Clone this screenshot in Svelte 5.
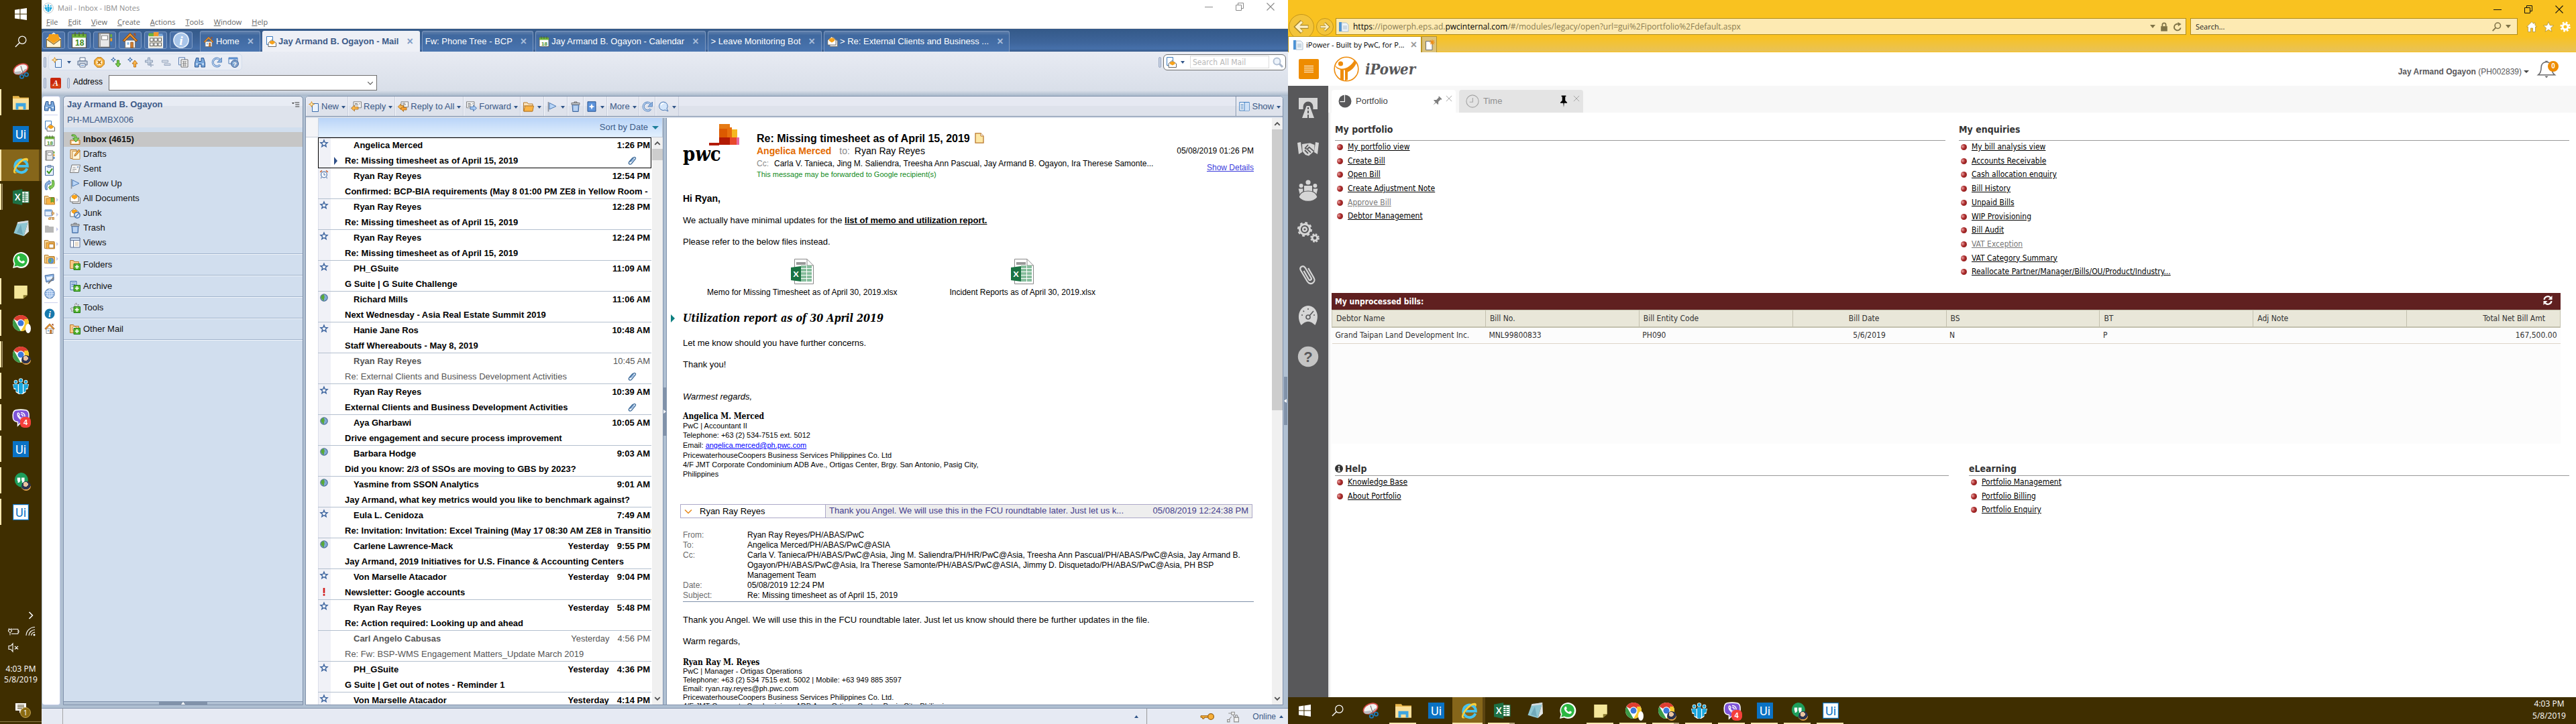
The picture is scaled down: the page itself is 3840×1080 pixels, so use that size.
<script>
  const icons = {
    windows: '<path fill="#fff" d="M0 2.4 6.6 1.4V7.6H0zM7.5 1.3 16 0v7.6H7.5zM0 8.4h6.6v6.2L0 13.7zM7.5 8.4H16V16l-8.5-1.3z"/>',
    search: '<circle cx="10" cy="6" r="5" fill="none" stroke="#fff" stroke-width="1.1"/><path d="M6.4 9.6 .8 15.2" stroke="#fff" stroke-width="1.2"/>',
    snip: '<ellipse cx="8" cy="6" rx="7.4" ry="4.6" transform="rotate(-24 8 6)" fill="#f4f4f4" stroke="#d8504c" stroke-width="1.2"/><path d="M1 9c1 3 5 3 8 1l-1-2z" fill="#b9bdc1"/><path d="m8 3 2.5 8M13 6l-5 5" stroke="#777" stroke-width=".7"/><circle cx="9" cy="13.5" r="1.8" fill="none" stroke="#1d79b8" stroke-width="1.2"/><circle cx="13.6" cy="11.5" r="1.8" fill="none" stroke="#1d79b8" stroke-width="1.2"/>',
    explorer: '<path d="M0 1.5h6l1 1.5h9v12H0z" fill="#e9b64b"/><path d="M0 4h16v11H0z" fill="#fbe09a"/><path d="M3 8.5h10V15h-2.6v-3.2H5.6V15H3z" fill="#3ea5e0"/>',
    ui: '<rect width="16" height="16" fill="#0a72c4"/><text x="8" y="12.4" text-anchor="middle" font-family="Roboto,sans-serif" font-size="12" fill="#fff">Ui</text>',
    uiw: '<rect x=".4" y=".4" width="15.2" height="15.2" fill="#fff" stroke="#0a72c4" stroke-width=".8"/><text x="8" y="12.4" text-anchor="middle" font-family="Roboto,sans-serif" font-size="12" fill="#0a72c4">Ui</text>',
    ie: '<path d="M14.2 10.8A6.2 6.2 0 1 1 14.6 8.6H4.6" fill="none" stroke="#45c3f0" stroke-width="2.6"/><path d="M1.2 15.4C-1.6 12.6 8-1 14.2.6c1.6.5 1.2 2.4.3 4C14.3 2.200 12 2 9 4.300 5 7.4 2 12.500 2.500 14.300c.3 1 1.700.7 3 0-1.400 1.200-3.300 1.900-4.300 1.100z" fill="#f7cf3c"/>',
    excel: '<path d="M8 2.500h8v11H8z" fill="#fff" stroke="#1e7145" stroke-width=".8"/><path d="M9 5h6M9 7h6M9 9h6M9 11h6M12 3v10" stroke="#1e7145" stroke-width=".7"/><path d="M0 1.800 9.500 0v16L0 14.200z" fill="#1e7145"/><text x="4.800" y="11.200" text-anchor="middle" font-family="Lato,sans-serif" font-weight="700" font-size="8.500" fill="#fff">X</text>',
    notepad: '<path d="M5 1.500 15.500 0 11 15.500 1 12.500z" fill="#8ec6d2"/><path d="M5 1.500 15.500 0l-.6 2L4.400 3.300z" fill="#d8dde0"/><path d="M15.500 0 16 11l-5 4.500z" fill="#e2e6e6"/><path d="M8 4 4 12l6 2z" fill="#5d98ab" opacity=".6"/>',
    whatsapp: '<path d="M0 16 1.200 11.800A8 8 0 1 1 4.300 15z" fill="#fff"/><path d="M1.500 14.500 2.400 11.500A6.600 6.600 0 1 1 4.700 13.700z" fill="#2cb742"/><path d="M5.200 4.300c.6-.6 1.200-.5 1.400 0l.6 1.500-.7 1c.6 1.200 1.500 2 2.700 2.600l1-1 1.700.8c.2 1-.8 2.100-1.900 2.100C7 11 4.300 7.800 4.500 5.700z" fill="#fff"/>',
    sticky: '<path d="M1.500 2h13v9.500L10.500 15h-9z" fill="#f5e79a"/><path d="M14.500 11.500h-4V15z" fill="#8a7a2e"/>',
    chrome: '<circle cx="8" cy="8" r="8" fill="#fff"/><path d="M8 8 1.070 4A8 8 0 0 1 14.930 4z" fill="#de3d30"/><path d="M8 8V0a8 8 0 0 1 6.930 4H8z" fill="#de3d30"/><path d="M1.070 4 4.600 10 8 16A8 8 0 0 1 1.070 4z" fill="#3c9a47"/><path d="M14.930 4A8 8 0 0 1 8 16l3.500-6V4z" fill="#f8c92d"/><circle cx="8" cy="8" r="3.800" fill="#fff"/><circle cx="8" cy="8" r="3" fill="#3c78dc"/>',
    notes: '<circle cx="8" cy="2.300" r="2.100" fill="#fff"/><circle cx="3" cy="3.800" r="1.900" fill="#fff"/><circle cx="13" cy="3.800" r="1.900" fill="#fff"/><path d="M0 6h16l-1 5-2 .5V14l-3 2H6l-3-2v-2.500L1 11z" fill="#fff"/><g fill="#1aa6dc"><circle cx="8" cy="2.300" r="1.600"/><circle cx="3" cy="3.800" r="1.400"/><circle cx="13" cy="3.800" r="1.400"/><path d="M6 4.600h4V15L8 16l-2-1zM.6 6.200h4.600v8.200L3 13v-2.500L1 9.800zM15.400 6.200h-4.600v8.200L13 13v-2.500l2-.7z"/></g>',
    viber: '<path d="M3 .5C6 0 10 0 13 .5c2 .5 2.800 2 3 4 .2 2 0 4-.3 5.500-.4 1.500-1.500 2.500-3.200 2.700l-4.500.3L5 16v-3.600C2 12 .6 11 .3 8.500-.1 5 .2 1.200 3 .5z" fill="#7f55d8" stroke="#fff" stroke-width="1"/><path d="M5 3.500c.8-.5 1.300.3 1.700 1.300L6 6c.6 1.500 1.500 2.300 2.800 2.800l1-.8 1.900 1.200c0 1.200-1 1.800-2 1.500C6.500 9.500 4 6 5 3.500zM8 3c2.500 0 4 1.500 4 4M8.200 4.800c1.300 0 2 .8 2 2" fill="none" stroke="#fff" stroke-width=".9"/>',
    hangouts: '<path d="M8 0a7.200 7.200 0 0 1 7.200 7.200C15.200 11 12 14 8.500 16v-1.700A7.200 7.200 0 0 1 8 0z" fill="#1e9e5c"/><path d="M4.500 5h3v3.500L6.200 10H5V8h-.5zM8.700 5h3v3.500L10.400 10H9.200V8h-.5z" fill="#fff"/>',
    // Notes toolbar and bookmark icons
    envelope: '<path d="M1 6.500 8 .8l7 5.700V15H1z" fill="#f8a21c" stroke="#fff" stroke-width=".8"/><path d="M3 7h10v4l-5 2-5-2z" fill="#ffe19a"/><path d="M3.500 2h9L14 7 8 11 2 7z" fill="#f6a11b"/><path d="M1 7l7 5 7-5v8H1z" fill="#fff4d6" stroke="#8a6c30" stroke-width=".7"/>',
    mail: '<path d="M1.500 .5h9v12h-9z" fill="#fff" stroke="#3c7cc0"/><path d="m4 10 5-4.500L15.500 10v5.500H4z" fill="#fff" stroke="#555" stroke-width=".9"/><path d="M6 8.500C8 6 11.500 6 13.500 8.500v2L9.800 12.500 6 10.500z" fill="#f7a21a"/>',
    calendar: '<path d="M1 2h14v13.500H1z" fill="#fff" stroke="#555" stroke-width=".9"/><path d="M1 2h14v3.500H1z" fill="#6fb23b"/><path d="M4 0v4M8 0v4M12 0v4" stroke="#486f27" stroke-width="1"/><text x="8.500" y="13.600" text-anchor="middle" font-family="Liberation Sans,sans-serif" font-weight="700" font-size="8" fill="#3e8a1d">18</text>',
    contacts: '<path d="M2 1h11v14H2z" fill="#e8e8e8" stroke="#666"/><path d="M5 3.500h6v4H5z" fill="#fff" stroke="#888" stroke-width=".8"/><path d="M3.500 1v14" stroke="#999"/><path d="M14.500 2v3" stroke="#6fb23b" stroke-width="1.800"/><path d="M14.500 6v3" stroke="#f0a020" stroke-width="1.800"/><path d="M14.500 10v3" stroke="#3c7cc0" stroke-width="1.800"/>',
    home: '<path d="M3 8h10v7.500H3z" fill="#fdfdfd" stroke="#777" stroke-width=".8"/><path d="M8 .8 .8 8.200l1.300 1.200L8 3.600l5.900 5.800 1.300-1.200z" fill="#f29a2e" stroke="#8f4d14" stroke-width=".7"/><path d="M11.500 1h2v3.500l-2-2z" fill="#a0522d"/><path d="M8.500 10h2.500v5.500H8.500z" fill="#d98232" stroke="#7c4515" stroke-width=".5"/><path d="M5 10h2v2.500H5z" fill="#8ab7e0"/>',
    grid: '<path d="M1 3.500h14v12H1z" fill="#e6e2d2" stroke="#fff" stroke-width=".8"/><path d="M1 1h5v3H1z" fill="#6fb23b"/><path d="M6 0h5v4H6z" fill="#f29a2e"/><path d="M11 1.500h4V4h-4z" fill="#7ba7d8"/><path d="M2.500 6h3v3h-3zM6.600 6h3v3h-3zM10.700 6h3v3h-3zM2.500 10.600h3v3h-3zM6.600 10.600h3v3h-3zM10.700 10.600h3v3h-3z" fill="#fff" stroke="#666" stroke-width=".7"/>',
    info: '<circle cx="8" cy="8" r="7.400" fill="#a9c6ea" stroke="#e8f1fb" stroke-width="1"/><text x="8" y="12.500" text-anchor="middle" font-family="Liberation Serif,serif" font-style="italic" font-weight="700" font-size="13" fill="#fff">i</text>',
    infob: '<circle cx="8" cy="8" r="7.500" fill="#1779ad"/><text x="8" y="12.500" text-anchor="middle" font-family="Liberation Serif,serif" font-style="italic" font-weight="700" font-size="13" fill="#fff">i</text>',
    create: '<path d="M5.500 3.500h9v12h-9z" fill="#eaf3ff" stroke="#3c6cab"/><path d="M4.500 .5 5.600 3.400 8.500 4.500 5.600 5.600 4.500 8.500 3.400 5.600 .5 4.500 3.400 3.400z" fill="#fff1b8" stroke="#d98a1c" stroke-width=".9"/>',
    print: '<path d="M4 1h8v5H4z" fill="#fff" stroke="#5b6f8e"/><path d="M1 6h14v6H1z" fill="#c9d2e0" stroke="#5b6f8e"/><path d="M4 10h8v5H4z" fill="#fff" stroke="#5b6f8e"/><path d="M5.500 12.500h5" stroke="#5b8fcf"/>',
    cancel: '<path d="M5 .7h6L15.300 5v6L11 15.300H5L.7 11V5z" fill="#f6b13c" stroke="#b87413"/><circle cx="8" cy="8" r="4.500" fill="#fff4d8"/><path d="m5.500 5.500 5 5m0-5-5 5" stroke="#c07a14" stroke-width="1.800"/>',
    nextu: '<path d="m4 .7 1 2.300L7.300 4 5 5 4 7.300 3 5 .7 4 3 3z" fill="#cfe2fa" stroke="#2f5f9f" stroke-width=".9"/><path d="M9.500 5h3v5H15l-4 5-4-5h2.500z" fill="#7fd050" stroke="#34801c" stroke-width=".9"/>',
    prevu: '<path d="m4 .7 1 2.300L7.300 4 5 5 4 7.300 3 5 .7 4 3 3z" fill="#cfe2fa" stroke="#2f5f9f" stroke-width=".9"/><path d="M9.500 15h3v-5H15l-4-5-4 5h2.500z" fill="#fbb64a" stroke="#b4690e" stroke-width=".9"/>',
    plus2: '<path d="M5.500 1h3v4h4v3h-4v4h-3V8h-4V5h4z" fill="#c6d2e3" stroke="#8697b0" stroke-width=".9"/><path d="M10 9v6M7 12h7" stroke="#9fadc2" stroke-width="1.500"/>',
    minus2: '<path d="M1.500 5h9v3h-9zM5 10h9v2.500H5z" fill="#d5dce8" stroke="#93a3bb" stroke-width=".9"/>',
    props: '<path d="M1.500 .8h9v11h-9z" fill="#eef4fd" stroke="#5a7db0"/><path d="M5 4h10v11H5z" fill="#fff" stroke="#6b6b6b"/><path d="M6.500 7h7M6.500 9.500h7M6.500 12h7M8.500 6v8M11 6v8" stroke="#777" stroke-width=".8"/>',
    find: '<path d="M2.500 1.500h3.500v5h4v-5h3.500L15.500 9v6H10v-4H6v4H.5V9z" fill="#7ba9dc" stroke="#24508e" stroke-width="1"/><path d="M2 10.500h3M11 10.500h3" stroke="#e8f2ff" stroke-width="1.400"/>',
    refresh: '<path d="M13 11.500A6 6 0 1 1 13 4.500" fill="none" stroke="#5482bd" stroke-width="3"/><path d="M13 11.500A6 6 0 1 1 13 4.500" fill="none" stroke="#cfe1f7" stroke-width="1.200"/><path d="M15.500 1v7H8.800z" fill="#8db3e2" stroke="#4b78b3" stroke-width=".8"/>',
    helpw: '<path d="M1 1h13v9H1z" fill="#eef4fd" stroke="#4b78b3"/><path d="M1 1h13v2.500H1z" fill="#5b8fd0"/><circle cx="10" cy="10" r="5.500" fill="#7c9fcb" stroke="#44689c"/><text x="10" y="13.500" text-anchor="middle" font-family="Liberation Sans,sans-serif" font-weight="700" font-size="9.500" fill="#fff">?</text>',
    acrobat: '<rect width="16" height="16" rx="2" fill="#c8260c"/><rect x="1" y="9" width="14" height="6" rx="1.500" fill="#e0561c" opacity=".6"/><text x="8" y="12" text-anchor="middle" font-family="Liberation Serif,serif" font-style="italic" font-weight="700" font-size="12" fill="#fff">A</text>',
    magnify: '<path d="m10 10 5 5" stroke="#a8b4c8" stroke-width="3"/><circle cx="6.500" cy="6.500" r="5" fill="#eef4fb" stroke="#b4c2d6" stroke-width="2"/>',
    todo: '<path d="M1.500 2h12v13.500h-12z" fill="#e8f0fb" stroke="#44689c"/><path d="M5 .5h5v3H5z" fill="#9fb4d0" stroke="#44689c" stroke-width=".7"/><path d="m4 9 3 3.500L12 5.500" fill="none" stroke="#3c9a1e" stroke-width="2"/>',
    repl: '<path d="M2 15C-.5 8 2 3 7 2.500V.7l3 3.800-3 3V6C4.500 6.500 3.500 10 4.500 15z" fill="#8fb6e6" stroke="#2f5f9f" stroke-width=".8"/><path d="M14 1c2.500 7 0 12-5 12.500v1.800L6.500 11.500l2.500-3V10c2.500-.5 3.500-4 2.500-9z" fill="#86cf58" stroke="#34801c" stroke-width=".8"/>',
    folderb: '<path d="M.5 2.500h5l1.500 2h8v10H.5z" fill="#f8d99a" stroke="#b67a2a"/><path d="M3 6h12.500v9H3z" fill="#f9b344" stroke="#b67a2a" stroke-width=".8"/><path d="M10 5h4v7l-2-1.800L10 12z" fill="#6fb23b" stroke="#34801c" stroke-width=".6"/>',
    folderd: '<path d="M.5 2.500h5l1.500 2h8v10H.5z" fill="#f8d99a" stroke="#b67a2a"/><path d="M3 6h12.500v9H3z" fill="#f9b344" stroke="#b67a2a" stroke-width=".8"/><path d="M7 8h7v6H7z" fill="#fff" stroke="#a4691c" stroke-width=".9"/>',
    folderg: '<path d="M.5 2.500h5l1.500 2h8v10H.5z" fill="#f8d99a" stroke="#b67a2a"/><path d="M3 6h12.500v9H3z" fill="#f9c264" stroke="#b67a2a" stroke-width=".8"/><circle cx="10" cy="11" r="4" fill="#5c9ad6" stroke="#3f6da6" stroke-width=".6"/><path d="M7.500 9.500 10 8l.5 3-2 3z" fill="#6fb23b"/>',
    foldergray: '<path d="M1 2.500h5l1.500 1.500H14V13H1z" fill="#b8b8b8"/>',
    workspace: '<path d="M1 1h10v9H1z" fill="#e8f0fb" stroke="#5a7db0"/><path d="M1 1h10v2.500H1z" fill="#7ba7d8"/><path d="M12.500 2v8M8 12.500h7M8 12v3M12.500 12v3" stroke="#c0803c" stroke-width=".8"/><path d="M11.500 5h3v2.500h-3zM6.500 13h3v2.500h-3zM11.500 13h3v2.500h-3z" fill="#f8c98a" stroke="#a4691c" stroke-width=".6"/>',
    design: '<path d="M1 3 14 1v9L3 13z" fill="#8fb6e6" stroke="#44689c"/><path d="M3 5.500 12 4v4L4 10z" fill="#e8f2ff"/><path d="m6 15 8-9" stroke="#777" stroke-width="1.800"/>',
    globe: '<circle cx="8" cy="8" r="7.200" fill="#8fb4e4" stroke="#3f6da6"/><path d="M.8 8h14.400M8 .8v14.400M2 4.500h12M2 11.500h12M8 .8C3.500 4 3.500 12 8 15.200M8 .8c4.500 3.200 4.500 11.200 0 14.400" fill="none" stroke="#eaf3ff" stroke-width=".8"/>',
    inbox: '<path d="M1 9h14v6.500H1z" fill="#f9c987" stroke="#b06e1e"/><path d="M3 11h10v3H3z" fill="#fff"/><path d="M3 1c4-1 7 .5 7.500 5H14l-5 6-4.500-6H8C7.500 3.500 6 2.500 3 3z" fill="#86cf58" stroke="#34801c" stroke-width=".8"/>',
    drafts: '<path d="M1 1.500h9v13H1z" fill="#fbe3bd" stroke="#b67a2a"/><path d="M4 3.500h11v12H4z" fill="#fff6dc" stroke="#c98c35"/><path d="m7 11 .6-2.800L13.500 1l2 1.800-6 7z" fill="#f9b344" stroke="#7c4515" stroke-width=".7"/>',
    sent: '<path d="M3 2h12.500L13 13.500H.5z" fill="#f6f6f6" stroke="#777"/><path d="M4.500 6h4M4 8.500h6M3.500 11h4" stroke="#999"/><path d="M11 4h2.500l-.5 2.500h-2.500z" fill="#9cb4d4"/>',
    flag: '<path d="M2.500 1v14.500" stroke="#8a8f99" stroke-width="1.600"/><path d="M4 2.500 14 7.500 4 12z" fill="#b9d6f8" stroke="#4b78b3"/>',
    alldocs: '<path d="m4 7 5-5.500L15.500 7v8.500H4z" fill="#e6e6e6" stroke="#777"/><path d="m.8 6 6-5.300L13 6v7H.8z" fill="#fff" stroke="#666" stroke-width=".9"/><path d="M3 4.500C5 2 9 2 11 4.500v2.500L7 9.500 3 7z" fill="#f7a21a"/>',
    junk: '<path d="m.8 6 6-5.300L13 6v7H.8z" fill="#fff" stroke="#666" stroke-width=".9"/><path d="M3 4.500C5 2 9 2 11 4.500v2.500L7 9.500 3 7z" fill="#f7a21a"/><circle cx="11" cy="11" r="4.200" fill="#dbe8f9" stroke="#4b78b3" stroke-width="1.500"/><path d="m8 14 6-6" stroke="#4b78b3" stroke-width="1.300"/>',
    trash: '<path d="M3 5h10l-.8 10.500H3.800z" fill="#8db3e2" stroke="#44689c"/><path d="M6 7v7M8 7v7M10 7v7" stroke="#e8f2ff"/><path d="M2 2.500h12V5H2z" fill="#d0d4d9" stroke="#666" stroke-width=".9"/><path d="M6 2.500V1h4v1.500" fill="none" stroke="#666"/>',
    views: '<path d="M1 1h14v14H1z" fill="#fff" stroke="#5a6f94"/><path d="M1 1h14v3.500H1z" fill="#cfe1f7" stroke="#5a6f94"/><path d="M5.500 4.500V15" stroke="#5a6f94"/><path d="M7.500 6.500H13V13H7.500z" fill="#eadfce"/>',
    folders: '<path d="M.5 1.500h5l1 2h7v10H.5z" fill="#f9c987" stroke="#b67a2a"/><path d="M6 6.500h9.500v9H6z" fill="#56b430" stroke="#1f7a10"/><path d="M10.700 8v6M7.700 11h6" stroke="#fff" stroke-width="1.600"/>',
    archive: '<path d="M1 .5h9v13H1z" fill="#d8e6f8" stroke="#3c6cab"/><path d="M2.500 3h6M2.500 5.500h6M2.500 8h4" stroke="#3c6cab"/><path d="M6 6.500h9.500v9H6z" fill="#56b430" stroke="#1f7a10"/><path d="M10.700 8v6M7.700 11h6" stroke="#fff" stroke-width="1.600"/>',
    tools: '<path d="M8 5.500c-1-2 0-4 2-4.500v2.500l1.500 1L13 3c.5 2-.5 3.500-2 4l-5 4c0 2-2 3-4 2l1.500-1.500L2.500 10 1 10c.5-2 2.500-2.500 4-1.500z" fill="#e8e8e8" stroke="#777" stroke-width=".8"/><path d="M6 6.500h9.500v9H6z" fill="#56b430" stroke="#1f7a10"/><path d="M10.700 8v6M7.700 11h6" stroke="#fff" stroke-width="1.600"/>',
    othermail: '<path d="M.5 1.500h5l1 2h7v10H.5z" fill="#f9c987" stroke="#b67a2a"/><circle cx="7" cy="7" r="3" fill="#fff" stroke="#b67a2a" stroke-width=".7"/><path d="M6 6.500h9.500v9H6z" fill="#56b430" stroke="#1f7a10"/><path d="M10.700 8v6M7.700 11h6" stroke="#fff" stroke-width="1.600"/>',
    reply: '<path d="M4 .8h11.500v9H4z" fill="#f4f4f4" stroke="#777" stroke-width=".9"/><path d="M6 3.500h4M6 5.500h5M13 3v1.500" stroke="#777"/><path d="M5.500 6v2.500H11V12H5.500v2.800L.5 10.400z" fill="#fbb64a" stroke="#a4691c" stroke-width=".8"/>',
    replyall: '<path d="M5 .8h10.500v8H5z" fill="#f4f4f4" stroke="#777" stroke-width=".9"/><path d="M7 3h4M7 5h5" stroke="#777"/><path d="M4.500 4v2.500H9V10H4.500v2.500L.3 8.200z" fill="#fbb64a" stroke="#a4691c" stroke-width=".8"/><path d="M8.500 7v2.500H13V13H8.500v2.500l-4-4.200z" fill="#f9a030" stroke="#a4691c" stroke-width=".8"/>',
    forward: '<path d="M.5 .8H12v9H.5z" fill="#f4f4f4" stroke="#777" stroke-width=".9"/><path d="M2.500 3.500h4M2.500 5.500h5M2.500 7.500h4M10 3v1.500" stroke="#777"/><path d="M10.500 6v2.500H6V12h4.500v2.800l5-4.400z" fill="#a9cbf5" stroke="#2f5f9f" stroke-width=".8"/>',
    folder: '<path d="M.5 2h5.500l1.500 2H14v3H.5z" fill="#fbe3bd" stroke="#b67a2a"/><path d="M.5 2v13h13" fill="none" stroke="#b67a2a"/><path d="M2.500 7h13l-1.500 8H1z" fill="#f9b344" stroke="#b67a2a"/>',
    addbox: '<path d="M2 .8h12v14.400H2z" fill="#5d94dc" stroke="#24508e"/><path d="m8 3.500 1.300 3.200L12.500 8 9.300 9.300 8 12.500 6.700 9.300 3.500 8l3.200-1.300z" fill="#fff"/>',
    chat: '<path d="M8 1a6.300 6.300 0 0 1 5 10l2 4-4.500-2A6.300 6.300 0 1 1 8 1z" fill="#d4e6fb" stroke="#4b78b3"/><path d="M4.500 6c.5-2 2-3 4-3" fill="none" stroke="#fff" stroke-width="1.500"/>',
    show: '<path d="M.8 1.500h14.400v12.500H.8z" fill="#fff" stroke="#3c7cc0"/><path d="M8 2h7v12H8z" fill="#cfe1f7"/><path d="M2.500 4.500h4M2.500 6.800h4M2.500 9h4M2.500 11.300h4M8 2v12" stroke="#3c7cc0"/>',
    star: '<path d="M8 2.500 9.600 6.300l4.100.3-3.100 2.700 1 4L8 11.100l-3.600 2.200 1-4-3.100-2.700 4.100-.3z" fill="#fff" stroke="#3f66a0" stroke-width="1.700"/>',
    alarm: '<circle cx="8" cy="8.500" r="5" fill="#fff" stroke="#5a7db0" stroke-width="1.500"/><path d="M8 5.500v3.500h2.500M4 13l-1.500 2M12 13l1.500 2" stroke="#5a7db0" stroke-width="1.200" fill="none"/><path d="m1.500 4.500 3-3M14.500 4.500l-3-3" stroke="#c8683c" stroke-width="2"/>',
    earth: '<circle cx="8" cy="8" r="6" fill="#7fa9d6" stroke="#46698f" stroke-width="1.200"/><path d="M8 2.500c-3 0-5.500 3-5 6.500 1.500 1 3 3.500 5 4.500V10l1-3z" fill="#58a838"/>',
    clip: '<path d="M4 9.500 9.500 3c1.500-1.500 4 .3 2.700 2.200L6.500 12c-2.500 2.500-5.500 0-3.500-2.700L8.500 3" fill="none" stroke="#46729f" stroke-width="1.400"/><path d="M6 9.500 10.500 4.500" stroke="#8fb6e6" stroke-width="1.300"/>',
    doc: '<path d="M2 .8h8L14 5v10.200H2z" fill="#fde8a6" stroke="#b9772c" stroke-width="1.300"/><path d="M10 .8V5h4" fill="#fff" stroke="#b9772c"/>',
    key: '<circle cx="12" cy="8" r="3.500" fill="#f7b03a" stroke="#9c6110"/><path d="M8.500 7H0v2h2v1.500h2V9h4.500z" fill="#f7b03a" stroke="#9c6110" stroke-width=".8"/>',
    netlock: '<path d="m1 14 5-6M2 3.500h5l4 9" stroke="#8d8d8d" fill="none"/><path d="M.5 12h3v3h-3zM6 2h4v3.500H6zM9.500 9h6v6h-6z" fill="#f4f4f4" stroke="#8d8d8d"/><path d="M11 9V7c0-1.500 3-1.500 3 0v2" fill="none" stroke="#8d8d8d"/>',
    page: '<path d="M1 1h4v14H1z" fill="#4c93d6"/><path d="M5 2h7l3 3v10H5z" fill="#eef4fa" stroke="#9fb4c8" stroke-width=".8"/><path d="M7 7h6M7 9h6M7 11h6" stroke="#a9bccc"/>',
    newtab: '<path d="M2.500 2.500h7l2.500 3v10H2.500z" fill="#fff" stroke="#6d6d6d"/><path d="M12 0v8M8 4h8M9.200 1.200l5.600 5.600M14.800 1.200 9.200 6.800" stroke="#f08c10" stroke-width="1.100"/>',
    // iPower side rail
    road: '<path d="M1 1h14v8.500h-3.300V7.500a3.700 3.700 0 0 0-7.400 0v2H1z" fill="#d6d6d6"/><path d="M6.800 7h2.400L12.500 16h-9z" fill="#d6d6d6"/><path d="M8 8v1.500M8 10.500v2M8 13.500V16" stroke="#58585a"/>',
    hands: '<path d="M0 3.500 2.500 3l1 7.500L1 12zM16 3.500 13.500 3l-1 7.500L15 12z" fill="#d6d6d6"/><path d="M3.500 4.500 7 4 9.500 3.700l3.200 1.300v4.500L8.500 13.300 6 12.500 3.800 10z" fill="#d6d6d6"/><path d="M8 5 5.800 7.500c1 1.200 2.300.4 3-.7l3.500 3M5.500 9l2.500 2.500M7.500 8.500l2.500 2.300" stroke="#58585a" fill="none" stroke-width=".9"/>',
    people: '<circle cx="8" cy="2" r="1.800" fill="#d6d6d6"/><circle cx="2.800" cy="4.500" r="1.500" fill="#d6d6d6"/><circle cx="13.200" cy="4.500" r="1.500" fill="#d6d6d6"/><path d="M5 4.500h6v5H5zM.8 6.700h3.400v4L2 11.500zM15.200 6.700h-3.400v4l2.200.8z" fill="#d6d6d6"/><path d="M1 13c1.500-4 4-4.500 7-4.500s5.500.5 7 4.500c-3 4.200-11 4.200-14 0z" fill="#d6d6d6" stroke="#58585a" stroke-width=".6"/>',
    gears: '<circle cx="5.500" cy="6" r="3.800" fill="none" stroke="#d6d6d6" stroke-width="1.500"/><circle cx="5.500" cy="6" r="1.400" fill="none" stroke="#d6d6d6" stroke-width="1.200"/><circle cx="5.500" cy="6" r="4.900" fill="none" stroke="#d6d6d6" stroke-width="1.200" stroke-dasharray="1.900 1.950"/><circle cx="13" cy="12.500" r="1.900" fill="none" stroke="#d6d6d6" stroke-width="1.400"/><circle cx="13" cy="12.500" r="2.900" fill="none" stroke="#d6d6d6" stroke-width="1" stroke-dasharray="1.300 1"/>',
    paperclip: '<path d="M4.500 6.500 9 12.200c1 1.200 2.600-.1 1.700-1.300L5.200 4C3.400 1.900.6 4.200 2.200 6.400l6 7.500c2.700 3.200 6.900-.2 4.400-3.400L7.500 4" transform="rotate(8 8 8)" fill="none" stroke="#d6d6d6" stroke-width="1.100"/>',
    gauge: '<path d="M2.800 15.500C-1.500 8 2.500 1 8 1s9.500 7 5.200 14.500L11 13.800c-2-1.200-4-1.200-6 0z" fill="#d6d6d6"/><circle cx="8" cy="9.500" r="1.500" fill="none" stroke="#58585a" stroke-width=".8"/><path d="M9 8.500 12 5M3 8h1M12 8h1M8 3v1M4.300 4.800l.7.700" stroke="#58585a" stroke-width=".8"/>',
    help: '<circle cx="8" cy="8" r="7.600" fill="#c4c4c4"/><text x="8" y="12" text-anchor="middle" font-family="Liberation Sans,sans-serif" font-weight="700" font-size="11" fill="#58585a">?</text>',
    pie: '<circle cx="8" cy="8" r="7.600" fill="#58585a"/><path d="M7.500 0v8.500H2" fill="none" stroke="#fff" stroke-width=".9"/>',
    clock: '<circle cx="8" cy="8" r="7.300" fill="none" stroke="#a5a5a5" stroke-width=".9"/><path d="M8.300 4v5H4.500" fill="none" stroke="#a5a5a5" stroke-width=".9"/>',
    pin: '<path d="M5 .5h6v1.500h-1v5l2.500 2.500v1H8.600L8 16l-.6-5.500H3.500v-1L6 7V2H5z"/>',
    lock: '<path d="M2.500 7h11v8.500h-11z" fill="#7f7347"/><path d="M5 7V4.500a3 3 0 0 1 6 0V7" fill="none" stroke="#7f7347" stroke-width="2"/>',
    reload: '<path d="M13.200 9.500A5.500 5.500 0 1 1 9 3.300" fill="none" stroke="#7f7347" stroke-width="2.200"/><path d="m8.500 0 6 3.500L9 7z" fill="#7f7347"/>',
    glass: '<circle cx="9.500" cy="6" r="4.800" fill="none" stroke="#7f7347" stroke-width="1.800"/><path d="M6 9.500 .8 15" stroke="#7f7347" stroke-width="2"/>',
    house: '<path d="M8 .5 .5 8h2v7.500h4V10h3v5.500h4V8h2L13 5.500V2h-2v1.500z" fill="#fff" stroke="#a78a2e" stroke-width=".7"/>',
    fav: '<path d="m8 .5 2.200 5.200 5.500.4-4.200 3.600 1.400 5.500L8 12.200l-4.900 3 1.400-5.500L.3 6.100l5.500-.4z" fill="#fff" stroke="#a78a2e" stroke-width=".7"/>',
    cog: '<circle cx="8" cy="8" r="6.400" fill="none" stroke="#fff" stroke-width="2.600" stroke-dasharray="2.600 2.426"/><circle cx="8" cy="8" r="4" fill="none" stroke="#fff" stroke-width="3"/>',
    back: '<path d="M15 8H4M8.500 2.500 3 8l5.500 5.500" fill="none" stroke="#a8882a" stroke-width="4"/><path d="M14.500 8H4M8.500 3 3.300 8l5.200 5" fill="none" stroke="#fdf0c4" stroke-width="2.400"/>',
    fwd: '<path d="M1 8h11M7.500 2.500 13 8l-5.500 5.500" fill="none" stroke="#a8882a" stroke-width="4"/><path d="M1.500 8H12M7.500 3l5.200 5-5.200 5" fill="none" stroke="#fdf0c4" stroke-width="2.400"/>',
    sync: '<path d="M2.500 7A5.500 5.500 0 0 1 12 4M13.500 9A5.500 5.500 0 0 1 4 12" fill="none" stroke="#fff" stroke-width="2.200"/><path d="M14.500 1v6h-6zM1.500 15V9h6z" fill="#fff"/>',
    bell: '<path d="M1 13c2-1.500 2.500-3 2.500-6.500C3.500 3.500 5.500 2 8 2s4.500 1.500 4.500 4.500C12.500 10 13 11.500 15 13z" fill="none" stroke="#6a6a6c" stroke-width=".9"/><path d="M6.500 14h3L8 15.500z" fill="#6a6a6c"/><path d="M7 1h2v1H7z" fill="#6a6a6c"/>',
    min: '<path d="M2 8.500h12" stroke="currentColor" stroke-width="1"/>',
    max: '<path d="M2.500 5.500h8v8h-8zM5.500 5.500v-3h8v8h-3" fill="none" stroke="currentColor"/>',
    close: '<path d="m2.500 2.500 11 11m0-11-11 11" stroke="currentColor" stroke-width="1.100"/>',
    chev: '<path d="m3 5.500 5 5 5-5" fill="none" stroke="currentColor" stroke-width="1.500"/>',
    chevup: '<path d="m3 10.500 5-5 5 5" fill="none" stroke="currentColor" stroke-width="2.400"/>',
    chevdn: '<path d="m3 5.500 5 5 5-5" fill="none" stroke="currentColor" stroke-width="2.400"/>',
    battery: '<path d="M6 4.500h9v7H5M15 6.500h1v3h-1M1.500 3v2.500M4.500 3v2.500M.5 5.500h5V8L3 9.500.5 8zM3 9.500v4" fill="none" stroke="#fff"/>',
    wifi: '<path d="M1 14A13 13 0 0 1 14 1.500M5 14a9 9 0 0 1 9-8.500M8.500 14A5.500 5.500 0 0 1 14 9.200" fill="none" stroke="#fff" stroke-width="1.200"/><circle cx="13" cy="13" r="1.500" fill="#fff"/>',
    mute: '<path d="M1 5.500h3l3-3.500v12l-3-3.500H1zM10 6l5 4.500M15 6l-5 4.500" fill="none" stroke="#fff" stroke-width="1.100"/>',
    action: '<path d="M0 1h16v11H9l-3 4v-4H0z" fill="#fff"/><path d="M3 4h10M3 6.500h10M3 9h7" stroke="#3f2e00" stroke-width="1.200"/>',
    navmenu: '<path d="M0 4h5L2.500 7z" fill="#333"/><path d="M6 4h9M7 8h8M7 12h8" stroke="#333" stroke-width="1.300"/>',
    excl: '<path d="M6.500 1h3v9h-3zM6.500 11.500h3v3h-3z" fill="#d21f1f"/>'
  };

  const apps = [
    { i: 'windows', l: 'Start' }, { i: 'search', l: 'Search' }, { i: 'snip', l: 'Snipping Tool' },
    { i: 'explorer', l: 'File Explorer', s: 'run' }, { i: 'ui', l: 'UiPath' }, { i: 'ie', l: 'Internet Explorer', s: 'active' },
    { i: 'excel', l: 'Excel', s: 'multi' }, { i: 'notepad', l: 'Notepad' }, { i: 'whatsapp', l: 'WhatsApp' },
    { i: 'sticky', l: 'Sticky Notes', s: 'run' }, { i: 'chrome', l: 'Chrome', s: 'run', b: 'white' },
    { i: 'chrome', l: 'Chrome profile', s: 'multi', b: 'face' }, { i: 'notes', l: 'IBM Notes', s: 'run' },
    { i: 'viber', l: 'Viber', s: 'run', b: '4' }, { i: 'ui', l: 'UiPath Studio', s: 'run' },
    { i: 'hangouts', l: 'Hangouts', s: 'run', b: 'face' }, { i: 'uiw', l: 'UiPath Robot', s: 'run' }
  ];
  const menus = ['File', 'Edit', 'View', 'Create', 'Actions', 'Tools', 'Window', 'Help'];
  const tabs = [
    { t: 'Home', i: 'home' }, { t: 'Jay Armand B. Ogayon - Mail', i: 'mail', on: true }, { t: 'Fw: Phone Tree - BCP' },
    { t: 'Jay Armand B. Ogayon - Calendar', i: 'calendar' }, { t: '> Leave Monitoring Bot' },
    { t: '> Re: External Clients and Business ...', i: 'alldocs' }
  ];
  const tools = ['print', 'cancel', 'nextu', 'prevu', 'plus2', 'minus2', 'props', 'find', 'refresh', 'helpw'];
  const marks = [
    ['find'],
    ['mail', 'calendar', 'contacts', 'todo', 'repl', 'folderb', 'workspace', 'foldergray', 'folderd', 'folderg'],
    ['design', 'globe'], ['infob', 'home']
  ];
  const expandable = ['folderb', 'workspace', 'foldergray', 'folderd', 'folderg'];
  const folders = [
    ['inbox', 'Inbox (4615)'], ['drafts', 'Drafts'], ['sent', 'Sent'], ['flag', 'Follow Up'],
    ['alldocs', 'All Documents'], ['junk', 'Junk'], ['trash', 'Trash'], ['views', 'Views']
  ];
  const groups = [['folders', 'Folders'], ['archive', 'Archive'], ['tools', 'Tools'], ['othermail', 'Other Mail']];
  const actions = [
    ['create', 'New', 1], ['reply', 'Reply', 1], ['replyall', 'Reply to All', 1], ['forward', 'Forward', 1], ['folder', '', 1],
    ['flag', '', 1], ['trash', '', 0], ['addbox', '', 1], ['', 'More', 1], ['refresh', '', 0], ['chat', '', 1]
  ];
  const mails = [
    { f: 'Angelica Merced', s: 'Re: Missing timesheet as of April 15, 2019', t: '1:26 PM', i: 'star', clip: 1, sel: 1 },
    { f: 'Ryan Ray Reyes', s: 'Confirmed: BCP-BIA requirements (May 8 01:00 PM ZE8 in Yellow Room -', t: '12:54 PM', i: 'alarm' },
    { f: 'Ryan Ray Reyes', s: 'Re: Missing timesheet as of April 15, 2019', t: '12:28 PM', i: 'star' },
    { f: 'Ryan Ray Reyes', s: 'Re: Missing timesheet as of April 15, 2019', t: '12:24 PM', i: 'star' },
    { f: 'PH_GSuite', s: 'G Suite | G Suite Challenge', t: '11:09 AM', i: 'star' },
    { f: 'Richard Mills', s: 'Next Wednesday - Asia Real Estate Summit 2019', t: '11:06 AM', i: 'earth' },
    { f: 'Hanie Jane Ros', s: 'Staff Whereabouts - May 8, 2019', t: '10:48 AM', i: 'star' },
    { f: 'Ryan Ray Reyes', s: 'Re: External Clients and Business Development Activities', t: '10:45 AM', read: 1, clip: 1 },
    { f: 'Ryan Ray Reyes', s: 'External Clients and Business Development Activities', t: '10:39 AM', i: 'star', clip: 1 },
    { f: 'Aya Gharbawi', s: 'Drive engagement and secure process improvement', t: '10:05 AM', i: 'earth' },
    { f: 'Barbara Hodge', s: 'Did you know: 2/3 of SSOs are moving to GBS by 2023?', t: '9:03 AM', i: 'earth' },
    { f: 'Yasmine from SSON Analytics', s: 'Jay Armand, what key metrics would you like to benchmark against?', t: '9:01 AM', i: 'earth' },
    { f: 'Eula L. Cenidoza', s: 'Re: Invitation: Invitation: Excel Training (May 17 08:30 AM ZE8 in Transition', t: '7:49 AM', i: 'star' },
    { f: 'Carlene Lawrence-Mack', s: 'Jay Armand, 2019 Initiatives for U.S. Finance & Accounting Centers', d: 1, t: '9:55 PM', i: 'earth' },
    { f: 'Von Marselle Atacador', s: 'Newsletter: Google accounts', d: 1, t: '9:04 PM', i: 'star', high: 1 },
    { f: 'Ryan Ray Reyes', s: 'Re: Action required: Looking up and ahead', d: 1, t: '5:48 PM', i: 'star' },
    { f: 'Carl Angelo Cabusas', s: 'Re: Fw: BSP-WMS Engagement Matters_Update March 2019', d: 1, t: '4:56 PM', read: 1 },
    { f: 'PH_GSuite', s: 'G Suite | Get out of notes - Reminder 1', d: 1, t: '4:36 PM', i: 'star' },
    { f: 'Von Marselle Atacador', s: '', d: 1, t: '4:14 PM', i: 'star' }
  ];
  const files = ['Memo for Missing Timesheet as of April 30, 2019.xlsx', 'Incident Reports as of April 30, 2019.xlsx'];
  const portfolio = ['My portfolio view', 'Create Bill', 'Open Bill', 'Create Adjustment Note', 'Approve Bill', 'Debtor Management'];
  const enquiries = ['My bill analysis view', 'Accounts Receivable', 'Cash allocation enquiry', 'Bill History', 'Unpaid Bills',
    'WIP Provisioning', 'Bill Audit', 'VAT Exception', 'VAT Category Summary', 'Reallocate Partner/Manager/Bills/OU/Product/Industry...'];
  const helpLinks = ['Knowledge Base', 'About Portfolio'];
  const learnLinks = ['Portfolio Management', 'Portfolio Billing', 'Portfolio Enquiry'];
  const muted = ['Approve Bill', 'VAT Exception'];
  const rail = [['road', 'Work'], ['hands', 'Clients'], ['people', 'People'], ['gears', 'Settings'], ['paperclip', 'Attachments'], ['gauge', 'Dashboard'], ['help', 'Help']];
  const cols = ['Debtor Name', 'Bill No.', 'Bill Entity Code', 'Bill Date', 'BS', 'BT', 'Adj Note', 'Total Net Bill Amt'];
  const bill = ['Grand Taipan Land Development Inc.', 'MNL99800833', 'PH090', '5/6/2019', 'N', 'P', '', '167,500.00'];
</script>

{#snippet ico(name, cls = '')}
  <svg class="ico {cls}" viewBox="0 0 16 16" aria-hidden="true">{@html icons[name]}</svg>
{/snippet}

{#snippet appList(dir)}
  <div class="apps {dir}">
    {#each apps as a}
      <button class="app {a.s ?? ''}" aria-label={a.l}>
        <span class="appicon">
          {@render ico(a.i, a.i === 'windows' || a.i === 'search' ? 'i18' : 'i24')}
          {#if a.b === '4'}<span class="dot count">4</span>
          {:else if a.b}<span class="dot {a.b}"></span>{/if}
        </span>
      </button>
    {/each}
  </div>
{/snippet}

{#snippet linkList(items, cls)}
  <ul class="links {cls}">
    {#each items as l}
      <li><a href="#top" class:muted={muted.includes(l)}>{l}</a></li>
    {/each}
  </ul>
{/snippet}

<div class="desktop" id="top">
  <aside class="vbar">
    {@render appList('down')}
    <div class="tray">
      <div class="trow end">{@render ico('chev', 'right')}</div>
      <div class="trow">{@render ico('battery')}{@render ico('wifi')}</div>
      <div class="trow">{@render ico('mute')}</div>
      <div class="clock"><div>4:03 PM</div><div>5/8/2019</div></div>
      <button class="center" aria-label="Notifications">{@render ico('action')}<span class="ncount">1</span></button>
      <div class="peek"></div>
    </div>
  </aside>

  <section class="mail">
    <header class="title">
      <span class="badge">{@render ico('notes', 'i12')}</span>
      <h1>Mail - Inbox - IBM Notes</h1>
      <div class="winctl">
        <button aria-label="Minimize">{@render ico('min')}</button>
        <button aria-label="Restore">{@render ico('max')}</button>
        <button aria-label="Close">{@render ico('close')}</button>
      </div>
    </header>
    <nav class="menu">
      {#each menus as m}<button><u>{m[0]}</u>{m.slice(1)}</button>{/each}
    </nav>
    <div class="tabbar">
      {#each ['envelope', 'calendar', 'contacts', 'home', 'grid', 'info'] as b}
        <button class="big" aria-label={b}>{@render ico(b, 'i24')}</button>
      {/each}
      <div class="tabs">
        {#each tabs as t}
          <div class="tab" class:on={t.on}>
            {#if t.i}{@render ico(t.i)}{/if}<span>{t.t}</span><button class="x" aria-label="Close tab">×</button>
          </div>
        {/each}
      </div>
    </div>
    <div class="toolbar">
      <div class="trow1">
        <i class="grip"></i>
        <div class="tgroup">
          <button aria-label="New">{@render ico('create')}</button><i class="caret first"></i>
          {#each tools as t}<button aria-label={t}>{@render ico(t)}</button>{/each}
        </div>
        <i class="grip push"></i>
        <div class="searchbox">
          {@render ico('mail')}<i class="caret"></i>
          <input aria-label="Search All Mail" placeholder="Search All Mail" />
          {@render ico('magnify')}
        </div>
      </div>
      <div class="trow2">
        <i class="grip"></i>
        <button class="acro" aria-label="Acrobat">{@render ico('acrobat')}</button>
        <i class="grip"></i>
        <label for="addr">Address</label>
        <div class="addr"><input id="addr" />{@render ico('chev')}</div>
      </div>
    </div>

    <div class="work">
      <div class="marks">
        {#each marks as g}
          <div class="mgroup">{#each g as m}<button aria-label={m}>{@render ico(m)}{#if expandable.includes(m)}<i class="more"></i>{/if}</button>{/each}</div>
        {/each}
      </div>

      <div class="navpane">
        <div class="owner">
          <strong>Jay Armand B. Ogayon</strong>{@render ico('navmenu', 'i12')}
          <span>PH-MLAMBX006</span>
        </div>
        <nav class="folders">
          {#each folders as [i, l], n}<a href="#top" class:cur={n === 0}>{@render ico(i)}{l}</a>{/each}
        </nav>
        {#each groups as [i, l]}<a class="group" href="#top">{@render ico(i)}{l}</a>{/each}
        <div class="lastrule"></div>
        <div class="hgrip"><i></i></div>
      </div>

      <div class="viewer">
        <div class="actions">
          {#each actions as [i, l, c]}
            <button aria-label={l || i}>{#if i}{@render ico(i)}{/if}{#if l}<span>{l}</span>{/if}{#if c}<i class="caret"></i>{/if}</button>
          {/each}
          <button class="showbtn">{@render ico('show')}<span>Show</span><i class="caret"></i></button>
        </div>
        <div class="split">
          <div class="list">
            <div class="sort"><div></div><button>Sort by Date<i class="caret teal"></i></button></div>
            <div class="listbody">
              <ul>
                {#each mails as m}
                  <li class:read={m.read} class:sel={m.sel}>
                    <div class="flagcol">{#if m.i}{@render ico(m.i)}{/if}{#if m.high}{@render ico('excl')}{/if}</div>
                    <div class="cell">
                      <div class="l1"><b>{m.f}</b><time>{#if m.d}<span>Yesterday</span>{/if}{m.t}</time></div>
                      <div class="l2"><span>{m.s}</span>{#if m.clip}{@render ico('clip')}{/if}</div>
                    </div>
                  </li>
                {/each}
              </ul>
              <div class="sbar">{@render ico('chevup', 'i12')}<i class="thumb"></i>{@render ico('chevdn', 'i12')}</div>
            </div>
          </div>
          <div class="vsplit"><i></i></div>
          <article class="read-pane">
            <div class="doc">
              <header class="mhead">
                <svg class="pwc" viewBox="0 0 88 66" role="img" aria-label="pwc">
                  <path fill="#e67a14" d="M54 1h16v20H54z" /><path fill="#dc5a00" d="M54 8h16v13H54z" />
                  <path fill="#f5b81f" d="M70 9h11v13H70z" /><path fill="#e8700c" d="M66 6h7v16h-7z" /><path fill="#b31b04" d="M54 21h18v11H54z" /><path fill="#e8482a" d="M70 21h11v11H70z" /><path fill="#e669a2" d="M80 21h4v11h-4z" /><path fill="#b31b04" d="M39 29h15v4H39z" />
                  <text x="0" y="56" font-family="DejaVu Serif Condensed,DejaVu Serif,serif" font-weight="700" font-size="29">p<tspan font-style="italic">w</tspan>c</text>
                </svg>
                <div class="mmeta">
                  <h2>Re: Missing timesheet as of April 15, 2019{@render ico('doc')}</h2>
                  <p class="who"><strong>Angelica Merced</strong><em>to:</em>Ryan Ray Reyes</p>
                  <p class="cc"><em>Cc:</em>Carla V. Tanieca, Jing M. Saliendra, Treesha Ann Pascual, Jay Armand B. Ogayon, Ira Therese Samonte...</p>
                  <p class="fwd">This message may be forwarded to Google recipient(s)</p>
                </div>
                <div class="mdate"><span>05/08/2019 01:26 PM</span><a href="#top">Show Details</a></div>
              </header>
              <p class="hi"><b>Hi Ryan,</b></p>
              <p>We actually have minimal updates for the <b class="key">list of memo and utilization report.</b></p>
              <p>Please refer to the below files instead.</p>
              <div class="files">
                {#each files as f}
                  <figure>
                    <svg viewBox="0 0 34 38" aria-hidden="true">
                      <path d="M5.500 .5H24l9.500 9.500v27.500h-28z" fill="#fff" stroke="#8a8a8a" /><path d="M24 .5V10h9.500" fill="none" stroke="#8a8a8a" />
                      <path d="M8 5h14v4H8z" fill="#9a9a9a" /><path d="M15 10h16v24H15z" fill="#86bd9c" /><path d="M15 14.500h16M15 19.500h16M15 24.500h16M15 29.500h16M23.500 10v24" stroke="#fff" />
                      <path d="M0 13l15-2v23L0 32z" fill="#1a7343" />
                      <text x="7.500" y="27" text-anchor="middle" font-family="Lato,sans-serif" font-weight="900" font-size="12" fill="#fff">X</text>
                    </svg>
                    <figcaption>{f}</figcaption>
                  </figure>
                {/each}
              </div>
              <h3>Utilization report as of 30 April 2019</h3>
              <p>Let me know should you have further concerns.</p>
              <p>Thank you!</p>
              <p class="warm"><i>Warmest regards,</i></p>
              <address>
                <b>Angelica M. Merced</b>
                <span>PwC | Accountant II</span><span>Telephone: +63 (2) 534-7515 ext. 5012</span>
                <span class="em">Email: <a href="#top">angelica.merced@ph.pwc.com</a></span>
                <span>PricewaterhouseCoopers Business Services Philippines Co. Ltd</span>
                <span>4/F JMT Corporate Condominium ADB Ave., Ortigas Center, Brgy. San Antonio, Pasig City,</span><span>Philippines</span>
              </address>
              <div class="thread">
                <div class="tname">{@render ico('chev', 'orange')}Ryan Ray Reyes</div>
                <div class="tmsg"><span>Thank you Angel. We will use this in the FCU roundtable later. Just let us k...</span><time>05/08/2019 12:24:38 PM</time></div>
              </div>
              <dl>
                <dt>From:</dt><dd>Ryan Ray Reyes/PH/ABAS/PwC</dd>
                <dt>To:</dt><dd>Angelica Merced/PH/ABAS/PwC@ASIA</dd>
                <dt>Cc:</dt><dd>Carla V. Tanieca/PH/ABAS/PwC@Asia, Jing M. Saliendra/PH/HR/PwC@Asia, Treesha Ann Pascual/PH/ABAS/PwC@Asia, Jay Armand B.<br />Ogayon/PH/ABAS/PwC@Asia, Ira Therese Samonte/PH/ABAS/PwC@ASIA, Jimmy D. Disquetado/PH/ABAS/PwC@Asia, PH BSP<br />Management Team</dd>
                <dt>Date:</dt><dd>05/08/2019 12:24 PM</dd>
                <dt>Subject:</dt><dd>Re: Missing timesheet as of April 15, 2019</dd>
              </dl>
              <p>Thank you Angel. We will use this in the FCU roundtable later. Just let us know should there be further updates in the file.</p>
              <p>Warm regards,</p>
              <address class="tight">
                <b>Ryan Ray M. Reyes</b>
                <span>PwC | Manager - Ortigas Operations</span><span>Telephone: +63 (2) 534 7515 ext. 5002 | Mobile: +63 949 885 3597</span>
                <span>Email: ryan.ray.reyes@ph.pwc.com</span><span>PricewaterhouseCoopers Business Services Philippines Co. Ltd.</span>
                <span>4/F JMT Corporate Condominium, ADB Ave., Ortigas Center, Pasig City, Philippines</span>
              </address>
            </div>
            <div class="sbar long">{@render ico('chevup', 'i12')}<i class="thumb"></i>{@render ico('chevdn', 'i12')}</div>
          </article>
        </div>
      </div>
      <div class="edge"><i></i></div>
    </div>

    <footer class="status">
      <div class="s0"></div>
      <div class="s1"><i class="caret up"></i></div>
      <div class="s2">{@render ico('key', 'i20')}{@render ico('netlock', 'i18')}<span>Online</span><i class="caret up"></i></div>
    </footer>
  </section>

  <section class="browser">
    <header class="chrome">
      <div class="winctl dark">
        <button aria-label="Minimize">{@render ico('min')}</button>
        <button aria-label="Restore">{@render ico('max')}</button>
        <button aria-label="Close">{@render ico('close')}</button>
      </div>
      <div class="bar">
        <button class="round bk" aria-label="Back">{@render ico('back', 'i24')}</button>
        <button class="round" aria-label="Forward">{@render ico('fwd')}</button>
        <div class="url">
          {@render ico('page')}
          <span class="urltext">https<i>://ipowerph.eps.ad.</i>pwcinternal.com<i>/#/modules/legacy/open?url=gui%2Fiportfolio%2Fdefault.aspx</i></span>
          <i class="caret olive"></i>{@render ico('lock', 'i14')}{@render ico('reload', 'i14')}
        </div>
        <div class="websearch"><input aria-label="Search" placeholder="Search..." />{@render ico('glass', 'i14')}<i class="caret olive"></i></div>
        <div class="cmds">
          <button aria-label="Home">{@render ico('house')}</button><button aria-label="Favorites">{@render ico('fav')}</button><button aria-label="Tools">{@render ico('cog')}</button>
        </div>
      </div>
      <div class="ietabs">
        <div class="ietab">{@render ico('page')}<span>iPower - Built by PwC, for P...</span><button aria-label="Close tab">×</button></div>
        <button class="newt" aria-label="New tab">{@render ico('newtab')}</button>
      </div>
    </header>

    <div class="apphead">
      <button class="burger" aria-label="Menu"><i></i><i></i><i></i><i></i></button>
      <svg class="logo" viewBox="0 0 38 38" aria-hidden="true">
        <circle cx="19" cy="19" r="17.800" fill="#fff" stroke="#ee8c0c" stroke-width="1.600" />
        <circle cx="10.500" cy="11" r="3.600" fill="#ee8c0c" />
        <path d="M2 13c3 4 7 5.500 11 5.500C20 18 26 14 31 6l3 4c-3 7-7.500 11-13 13.500V35l-4 1.200V22c0-1.500-1-2-2-1.500V36l-5-2V20C6 19 3 17 2 13z" fill="#ee8c0c" />
      </svg>
      <strong class="brand">iPower</strong>
      <button class="user"><b>Jay Armand Ogayon</b> (PH002839)<i class="caret gray"></i></button>
      <button class="bell" aria-label="Notifications">{@render ico('bell', 'i28')}<span>0</span></button>
    </div>

    <div class="appbody">
      <nav class="rail">
        {#each rail as [i, l]}<button aria-label={l}>{@render ico(i, 'i30')}</button>{/each}
      </nav>
      <main>
        <div class="ptabs">
          <div class="ptab on">{@render ico('pie', 'i20')}<span>Portfolio</span>{@render ico('pin', 'tilt')}<button aria-label="Close Portfolio">{@render ico('close', 'i12')}</button></div>
          <div class="ptab">{@render ico('clock', 'i20')}<span>Time</span>{@render ico('pin', 'i18 black')}<button aria-label="Close Time">{@render ico('close', 'i12')}</button></div>
        </div>
        <div class="two">
          <section><h2>My portfolio</h2>{@render linkList(portfolio, 'six')}</section>
          <section><h2>My enquiries</h2>{@render linkList(enquiries, 'ten')}</section>
        </div>
        <section class="bills">
          <header><h2>My unprocessed bills:</h2><button aria-label="Refresh">{@render ico('sync')}</button></header>
          <table>
            <thead><tr>{#each cols as c}<th>{c}</th>{/each}</tr></thead>
            <tbody><tr>{#each bill as c}<td>{c}</td>{/each}</tr></tbody>
          </table>
        </section>
        <div class="two low">
          <section><h2><svg class="ico i12" viewBox="0 0 16 16" aria-hidden="true"><circle cx="8" cy="8" r="8" fill="#333" /><path d="M6.500 3h3v2.500h-3zM6 7h3.500v5H11v1.500H5.500V12H7V8.500H6z" fill="#fff" /></svg>Help</h2>{@render linkList(helpLinks, 'two-l')}</section>
          <section><h2>eLearning</h2>{@render linkList(learnLinks, 'three-l')}</section>
        </div>
      </main>
    </div>

    <footer class="hbar">
      {@render appList('across')}
      <div class="clock"><div>4:03 PM</div><div>5/8/2019</div></div>
    </footer>
  </section>
</div>

<style>
  :global(body) { margin: 0; overflow: hidden; }
  .desktop, .desktop * { box-sizing: border-box; }
  .desktop { display: flex; height: 100vh; font: 13px/16px "Liberation Sans", Arial, sans-serif; color: #000; background: #fff; white-space: nowrap; }
  button { font: inherit; color: inherit; background: none; border: 0; padding: 0; margin: 0; display: flex; align-items: center; }
  input { font: inherit; border: 0; background: none; padding: 0; min-width: 0; outline: 0; }
  h1, h2, h3, p, ul, dl, dd, figure { margin: 0; padding: 0; }
  ul { list-style: none; }
  .ico { width: 16px; height: 16px; flex: none; display: block; overflow: visible; }
  .i12 { width: 12px; height: 12px; }
  .i14 { width: 14px; height: 14px; }
  .i18 { width: 18px; height: 18px; }
  .i20 { width: 20px; height: 20px; }
  .i24 { width: 24px; height: 24px; }
  .i28 { width: 28px; height: 28px; }
  .i30 { width: 32px; height: 32px; }
  .right { transform: rotate(-90deg); }
  .caret { width: 0; height: 0; flex: none; border: solid transparent; border-width: 4px 3px 0; border-top-color: #2f5488; }
  .caret.up { border-width: 0 3px 4px; border-bottom-color: #2f5488; }
  .caret.teal { border-width: 5px 5px 0; border-top-color: #1f7f9c; }
  .caret.olive { border-width: 5px 4px 0; border-top-color: #7f7347; }
  .caret.gray { border-width: 4px 4px 0; border-top-color: #444; }

  /* task bars */
  .vbar { width: 62px; flex: none; background: #3f2e00; color: #fff; display: flex; flex-direction: column; justify-content: space-between; font: 12px/16px "Open Sans", sans-serif; }
  .apps { display: flex; }
  .down { flex-direction: column; }
  .app { justify-content: center; position: relative; flex: none; }
  .down .app { height: 47px; width: 62px; }
  .down .app:first-child, .down .app:nth-child(2) { height: 41px; }
  .across .app { width: 49px; height: 40px; }
  .appicon { position: relative; }
  .app.run::before, .app.multi::before, .app.active::before { content: ""; position: absolute; background: #fde9b0; }
  .down .app::before { left: 0; top: 4px; width: 2px; height: 39px; }
  .down .active { background: linear-gradient(to right, #86661a 58px, #5c4510 58px); }
  .down .active::before { top: 0; height: 47px; }
  .down .multi::after { content: ""; position: absolute; left: 3px; top: 4px; width: 1px; height: 39px; background: #b3a37a; }
  .across .app::before { bottom: 0; left: 4px; width: 40px; height: 2px; }
  .across .multi::after { content: ""; position: absolute; right: 5px; bottom: 0; width: 8px; height: 2px; background: #b3a37a; }
  .across .active { background: linear-gradient(to right, #86661a 45px, #5c4510 45px); }
  .across .active::before { left: 0; width: 45px; }
  .dot { position: absolute; right: -3px; bottom: -3px; width: 14px; height: 14px; border-radius: 50%; }
  .count { background: #f5403a; color: #fff; font: bold 11px/16px "Liberation Sans", sans-serif; width: 16px; height: 16px; border-radius: 6px; text-align: center; }
  .white { width: 8px; background: #fff; }
  .face { background: radial-gradient(circle at 45% 32%, #e9c3a0 28%, #2c3350 30% 62%, #e2a24b 64%); }
  .tray { display: flex; flex-direction: column; }
  .trow { display: flex; gap: 10px; padding: 0 8px 0 12px; height: 24px; align-items: center; }
  .trow.end { justify-content: flex-end; height: 24px; }
  .vbar .clock { text-align: center; padding: 12px 0 18px; }
  .center { justify-content: center; position: relative; height: 32px; }
  .ncount { position: absolute; left: 30px; top: 15px; width: 16px; height: 16px; border-radius: 50%; background: #8a6a10; border: 1px solid #c0a050; text-align: center; font-size: 11px; line-height: 14px; }
  .peek { height: 4px; margin-top: 4px; border-top: 1px solid #8a7a48; }
  .hbar { height: 40px; flex: none; background: #3f2e00; color: #fff; display: flex; justify-content: space-between; font: 12px/18px "Open Sans", sans-serif; }
  .hbar .clock { text-align: center; padding: 1px 8px 0 0; width: 72px; }

  /* mail window */
  .mail { flex: 1858 1 0; min-width: 0; display: flex; flex-direction: column; background: #e6eaf3; color: #3c5a88; }
  .title { display: flex; align-items: center; height: 24px; flex: none; background: #fff; padding-left: 2px; gap: 6px; }
  .title h1 { font: 11px/16px "Open Sans", sans-serif; color: #8d8d8d; }
  .badge { padding: 1px; border: 1px solid #c4c9cc; border-radius: 50%; }
  .winctl { margin-left: auto; display: flex; gap: 30px; color: #8a8a8a; padding: 0 18px 4px 0; }
  .menu { display: flex; height: 19px; flex: none; gap: 15px; background: #fff; padding-left: 7px; font: 11px/16px "Open Sans", sans-serif; color: #666; border-bottom: 1px solid #f0ece8; }
  .tabbar { display: flex; height: 34px; flex: none; background: linear-gradient(#345988, #3e659b 60%, #4670aa 88%, #355888); padding: 0 0 0 1px; gap: 4px; align-items: center; color: #fff; }
  .big { width: 34px; height: 26px; justify-content: center; border: 1px solid #7f9cc5; border-radius: 3px; background: #4a71a8; }
  .tabs { display: flex; gap: 3px; align-self: flex-end; height: 31px; margin-left: 7px; }
  .tab { display: flex; align-items: center; gap: 3px; padding: 0 9px 0 4px; border: 1px solid #7d98bf; border-bottom: 0; border-radius: 3px 3px 0 0; background: linear-gradient(#5f7fab, #3f689f 20%, #4a75b0); }
  .tab.on { background: #eef0f6; color: #3c5a88; font-weight: bold; border-color: #eef0f6; }
  .x { margin-left: 9px; font: bold 16px/16px "Liberation Sans", sans-serif; color: #a9bedb; }
  .on .x { color: #7f9cc5; }
  .toolbar { height: 66px; flex: none; background: linear-gradient(#e8ebf3, #d9dfe9 88%, #a9b9cb); }
  .trow1, .trow2 { display: flex; align-items: center; padding: 1px 3px 0; height: 30px; gap: 3px; }
  .trow2 { padding-top: 0; height: 33px; gap: 4px; color: #000; font-size: 12px; }
  .grip { width: 4px; height: 16px; border: 1px solid #9aa9c2; border-radius: 2px; background: #c9d2e4; }
  .tgroup { display: flex; align-items: center; gap: 9px; height: 25px; padding: 0 4px; border: 1px solid #d3ddec; border-radius: 5px; background: #e9edf5; }
  .caret.first { margin: 0 0 0 -2px; }
  .push { margin-left: auto; }
  .searchbox { display: flex; align-items: center; gap: 5px; width: 183px; height: 24px; border: 1px solid #6e6e6e; border-radius: 6px; background: #fff; padding: 0 3px; }
  .searchbox .caret { margin: 0 3px 0 1px; }
  .searchbox input { flex: 1; height: 19px; border: 1px solid #dcdcdc; padding-left: 3px; font: 12px/16px "DejaVu Sans Condensed", "DejaVu Sans", sans-serif; }
  .searchbox input::placeholder { color: #b8b8b8; opacity: 1; }
  .acro { padding: 0 5px 0 2px; }
  .trow2 label { padding: 0 5px 4px 1px; }
  .addr { width: 400px; height: 23px; background: #fff; border: 1px solid #6e6e6e; display: flex; align-items: center; color: #555; }
  .addr input { flex: 1; padding-left: 4px; }
  .addr .ico { width: 12px; height: 12px; margin-right: 3px; }

  .work { flex: 1; min-height: 0; display: flex; background: #b0c0d2; border-bottom: 1px solid #7f90aa; padding-bottom: 4px; }
  .marks { width: 27px; margin: 0 4px 0 1px; background: #fff; border: 1px solid #c0c9e4; border-width: 1px 1px 1px 0; border-radius: 4px; padding: 5px 0 0 3px; flex: none; }
  .mgroup { display: flex; flex-direction: column; gap: 6px; padding-bottom: 5px; margin-bottom: 8px; border-bottom: 1px solid #ccd0ee; width: 20px; }
  .mgroup:first-child { padding-top: 1px; }
  .mgroup:last-child { border: 0; }
  .more { border: solid transparent; border-width: 3px 0 3px 3px; border-left-color: #c3c9ea; margin-left: 2px; }
  .navpane { width: 358px; flex: none; margin-right: 3px; background: #d1deee; border: 1px solid #7f90aa; border-radius: 5px 5px 0 0; display: flex; flex-direction: column; color: #111; }
  .owner { display: flex; flex-wrap: wrap; justify-content: space-between; align-items: center; height: 46px; padding: 0 4px 0 5px; background: linear-gradient(#e8ecf4 30%, #dee3ec 30%); color: #3c5a88; border-radius: 5px 5px 0 0; }
  .owner span { width: 100%; }
  .folders { display: flex; flex-direction: column; padding: 7px 0 5px; }
  .folders a { display: flex; align-items: center; gap: 4px; height: 22px; padding-left: 9px; color: inherit; text-decoration: none; }
  .folders .cur { font-weight: bold; background: #c6c6c6; }
  .group { display: flex; align-items: center; gap: 4px; height: 32px; padding-left: 9px; color: inherit; text-decoration: none; border-top: 1px solid #9fb2cb; box-shadow: inset 0 1px #f2f7fc; }
  .lastrule { border-top: 1px solid #9fb2cb; border-bottom: 1px solid #f2f7fc; }
  .hgrip { margin-top: auto; height: 5px; background: #b0c0d2; border-top: 1px solid #8093ad; display: flex; justify-content: center; }
  .hgrip i { width: 72px; background: #8192a9; display: flex; justify-content: center; }
  .hgrip i::before { content: ""; border: solid transparent; border-width: 0 3px 4px; border-bottom-color: #fff; }

  .viewer { flex: 1; min-width: 0; display: flex; flex-direction: column; border: 1px solid #7f90aa; border-radius: 5px 5px 0 0; background: #fff; overflow: hidden; }
  .actions { display: flex; height: 30px; flex: none; background: linear-gradient(#e6e9f2 50%, #dee2eb 50%); border-bottom: 1px solid #7f90aa; }
  .actions button { padding: 0 3px 0 4px; border-right: 1px solid #c9cfdd; box-shadow: inset 1px 0 #f4f6fa; }
  .actions .ico + span { margin-left: 3px; }
  .actions .caret { margin: 2px 0 0 4px; }
  .actions .ico + .caret { margin-left: 5px; }
  .actions .showbtn { margin-left: auto; border-right: 0; border-left: 1px solid #7f90aa; }
  .split { flex: 1; min-height: 0; display: flex; border-top: 2px solid #d4dbe6; }
  .list { width: 532px; flex: none; display: flex; flex-direction: column; }
  .sort { display: flex; height: 29px; flex: none; border-bottom: 1px solid #c4ccd8; }
  .sort div { width: 18px; background: #f3f4f7; }
  .sort button { flex: 1; justify-content: flex-end; gap: 6px; padding-right: 5px; background: linear-gradient(#b9d4f8, #e2f0fd); border: 1px solid #c9d3df; border-width: 0 1px; }
  .listbody { flex: 1; min-height: 0; display: flex; }
  .listbody ul { flex: 1; min-width: 0; height: 100%; overflow: hidden; padding: 0 1px 0 18px; }
  li { color: #000; }
  .listbody li { display: flex; height: 46px; font-weight: bold; border-bottom: 1px solid #b4c0cf; }
  .listbody .sel { outline: 1px solid #000; outline-offset: -1px; border-bottom-color: #000; }
  .flagcol { width: 19px; background: #f0f1f7; border-left: 1px solid #dcdfea; flex: none; padding: 2px 0 0 1px; display: flex; flex-direction: column; gap: 11px; }
  .flagcol .ico { width: 14px; height: 14px; }
  .cell { flex: 1; min-width: 0; overflow: hidden; }
  .l1, .l2 { display: flex; align-items: center; justify-content: space-between; height: 23px; padding: 0 2px 0 34px; }
  .l2 { padding-left: 21px; padding-right: 0; position: relative; }
  .l2 .ico { margin-right: 20px; }
  .sel .l2::before { content: ""; position: absolute; left: 5px; top: 6px; border: solid transparent; border-width: 6px 0 6px 5px; border-left-color: #2f4f88; }
  .l1 span { margin-right: 12px; }
  .read { color: #555; }
  .read time, .read .l2 { font-weight: normal; }
  .sbar { width: 16px; flex: none; background: #f0f0f0; color: #505050; display: flex; flex-direction: column; align-items: center; padding: 3px 0; }
  .sbar .ico:last-child { margin-top: auto; }
  .thumb { width: 16px; height: 17px; background: #cdcdcd; margin-top: 2px; }
  .long .thumb { height: 419px; }
  .vsplit { width: 6px; flex: none; background: #b0c0d2; border: 1px solid #8093ad; border-width: 0 1px; display: flex; align-items: center; }
  .vsplit i { width: 6px; height: 72px; background: #8192a9; display: flex; align-items: center; }
  .vsplit i::before { content: ""; border: solid transparent; border-width: 3px 0 3px 4px; border-left-color: #fff; }
  .edge { width: 7px; flex: none; display: flex; align-items: center; }
  .edge i { width: 5px; height: 72px; margin-left: 1px; background: #8192a9; display: flex; align-items: center; }
  .edge i::before { content: ""; border: solid transparent; border-width: 3px 4px 3px 0; border-right-color: #fff; }

  .read-pane { flex: 1; min-width: 0; display: flex; color: #000; }
  .doc { flex: 1; min-width: 0; height: 100%; overflow: hidden; padding: 8px 27px 0 24px; }
  .mhead { display: flex; margin-bottom: 22px; }
  .pwc { width: 88px; height: 66px; margin-right: 22px; flex: none; }
  .mmeta { padding-top: 14px; }
  .mmeta h2 { display: flex; gap: 6px; font: bold 16px/18px "Liberation Sans", sans-serif; }
  .who { font-size: 14px; line-height: 18px; }
  .who strong { color: #e36a00; }
  em { font-style: normal; color: #8a8a8a; margin: 0 7px 0 12px; }
  .cc { font-size: 12px; line-height: 20px; }
  .cc em { margin: 0 8px 0 0; }
  .fwd { color: #0f8a1a; font-size: 11px; line-height: 12px; }
  .mdate { margin-left: auto; padding-top: 32px; display: flex; flex-direction: column; align-items: flex-end; font-size: 12px; line-height: 18px; gap: 7px; }
  .mdate a { color: #3c3cdc; }
  .doc > p { margin-bottom: 16px; }
  .hi b { font-size: 14px; }
  .key { text-decoration: underline; }
  .files { display: flex; gap: 78px; padding-left: 36px; margin-top: 17px; }
  .files svg { width: 34px; height: 38px; display: block; margin: 0 auto 5px; }
  figcaption { font-size: 12px; line-height: 14px; }
  h3 { font: italic bold 16px/20px "DejaVu Serif Condensed", "DejaVu Serif", serif; margin: 22px 0 19px; position: relative; }
  h3::before { content: ""; position: absolute; left: -18px; top: 4px; border: solid transparent; border-width: 6px 0 6px 6px; border-left-color: #0c7f80; }
  .doc > .warm { margin: 32px 0 14px; }
  address { font: 11px/14px "Liberation Sans", sans-serif; display: flex; flex-direction: column; }
  address b { font: bold 12px/14px "DejaVu Serif Condensed", "DejaVu Serif", serif; }
  .em { line-height: 16px; }
  .em a { color: #00f; }
  .tight { line-height: 13px; }
  .thread { display: flex; height: 21px; margin: 38px 2px 18px -4px; border: 1px solid #aca8c8; font-size: 13px; line-height: 18px; }
  .tname { width: 215px; flex: none; display: flex; align-items: center; gap: 9px; padding-left: 3px; }
  .orange { color: #e88a1c; }
  .tmsg { flex: 1; display: flex; justify-content: space-between; background: #eee; border-left: 1px solid #aca8c8; color: #433c8c; padding: 0 5px; }
  dl { display: grid; grid-template-columns: 96px 1fr; font-size: 12px; line-height: 15px; border-bottom: 1px solid #7f90aa; margin-bottom: 19px; padding-bottom: 1px; }
  dt { color: #6a6a6a; }
  .status { height: 23px; flex: none; display: flex; align-items: center; }
  .s0 { width: 32px; height: 23px; border-right: 1px solid #a6a6a6; }
  .s1 { flex: 1; display: flex; justify-content: flex-end; padding-right: 12px; }
  .s2 { width: 211px; height: 23px; border-left: 1px solid #9a9a9a; display: flex; align-items: center; justify-content: flex-end; padding-right: 7px; }
  .s2 span { margin: 0 5px 0 20px; font-size: 12px; }
  .s2 .i20 { margin-right: 19px; }

  /* browser window */
  .browser { flex: 1920 1 0; min-width: 0; display: flex; flex-direction: column; background: #fff; }
  .chrome { height: 78px; flex: none; background: linear-gradient(#f9c220 54px, #e8c257 77px, #f9c220 77px); font: 11px/16px "Open Sans", sans-serif; display: flex; flex-direction: column; }
  .dark { color: #111; padding: 6px 17px 0 0; height: 27px; gap: 30px; align-items: flex-start; }
  .bar { display: flex; align-items: center; height: 25px; padding: 0 8px 0 1px; }
  .round { width: 26px; height: 26px; border: 1px solid #c4951a; border-radius: 50%; justify-content: center; background: #f3c43a; margin-right: 3px; }
  .bk { width: 38px; height: 38px; }
  .url, .websearch { display: flex; align-items: center; height: 25px; background: #fdeab2; border: 1px solid #b08c1c; }
  .url { flex: 1279 1 0; gap: 6px; padding: 0 5px 0 3px; margin-right: 6px; font-size: 12px; }
  .urltext { flex: 1; }
  .urltext i { font-style: normal; color: #8a7c50; }
  .websearch { flex: 478 1 0; gap: 6px; padding: 0 9px 0 7px; }
  .websearch input { flex: 1; }
  .websearch input::placeholder { color: #222; opacity: 1; }
  .cmds { display: flex; gap: 9px; padding-left: 13px; }
  .ietabs { display: flex; height: 24px; margin-top: 2px; }
  .ietab { display: flex; align-items: center; gap: 4px; width: 199px; background: #fff; border: 1px solid #c29a20; border-bottom: 0; padding: 0 6px; }
  .ietab button { font: bold 16px/16px "Liberation Sans", sans-serif; color: #999; margin-left: auto; }
  .newt { width: 23px; justify-content: center; background: #dcc27a; border: 1px solid #b3922e; border-bottom: 0; }
  .apphead { display: flex; align-items: center; height: 50px; flex: none; padding: 0 30px 0 16px; color: #58585a; }
  .burger { width: 30px; height: 30px; background: #ee8c00; border-radius: 2px; flex-direction: column; justify-content: center; gap: 2px; }
  .burger i { width: 14px; height: 1px; background: #fff; }
  .logo { width: 38px; height: 38px; margin: 0 9px 0 22px; }
  .brand { font: italic bold 22px/30px "DejaVu Serif Condensed", "DejaVu Serif", serif; }
  .user { margin-left: auto; padding-top: 8px; white-space: pre; font-size: 12px; }
  .user .caret { margin-left: 3px; }
  .bell { position: relative; margin-left: 12px; }
  .bell span { position: absolute; right: -4px; top: 2px; width: 16px; height: 16px; border-radius: 50%; background: #ee8c00; color: #fff; font: bold 10px/16px "Liberation Sans", sans-serif; text-align: center; }
  .appbody { flex: 1; min-height: 0; display: flex; }
  .rail { width: 60px; flex: none; background: #58585a; display: flex; flex-direction: column; align-items: center; gap: 30px; padding-top: 16px; }
  main { flex: 1; min-width: 0; color: #333; font: 12px/16px "DejaVu Sans Condensed", "DejaVu Sans", sans-serif; box-shadow: inset 4px 0 4px -3px #ccc; }
  .ptabs { display: flex; gap: 5px; height: 40px; background: #f7f7f7; padding: 6px 0 0 5px; font: 13px/16px "Liberation Sans", sans-serif; }
  .ptab { display: flex; width: 185px; height: 34px; padding: 0 4px 0 10px; align-items: center; background: #e4e4e4; color: #8f8f8f; border-radius: 4px 4px 0 0; }
  .ptab.on { background: #fff; color: #444; }
  .ptab span { flex: 1; padding-left: 6px; }
  .ptab > button { align-self: flex-start; padding: 7px 0 0 4px; color: #999; }
  .tilt { transform: rotate(45deg); opacity: .5; }
  .black { color: #000; }
  .two { display: grid; grid-template-columns: 1fr 1fr; gap: 20px; padding: 16px 10px 0; height: 269px; }
  .two h2 { display: flex; align-items: center; gap: 3px; font-size: 14px; line-height: 18px; padding-bottom: 7px; border-bottom: 1px solid #999; }
  .links { display: grid; grid-auto-rows: 1fr; }
  .six { height: 124px; }
  .ten { height: 207px; }
  .two-l { height: 41px; }
  .three-l { height: 62px; }
  .links li { display: flex; align-items: flex-start; gap: 7px; padding: 1px 0 0 3px; }
  .links li::before { content: ""; width: 9px; height: 9px; margin-top: 4px; border-radius: 50%; background: radial-gradient(circle at 30% 40%, #e8a0a0, #a82828 45%, #7c1a1a); }
  .links a { color: #000; }
  .links .muted { color: #777; }
  .bills { margin: 0 23px 0 5px; height: 225px; background: #fcfcfc; }
  .bills header { display: flex; align-items: center; justify-content: space-between; height: 25px; background: #602020; color: #fff; padding: 0 11px 3px 5px; }
  .bills header h2 { font-size: 12px; line-height: 16px; padding-top: 3px; }
  table { width: 100%; table-layout: fixed; border-collapse: collapse; }
  th { height: 25px; background: #e9e7d9; font-weight: normal; text-align: left; padding: 0 22px 0 6px; border: solid #c3c0ae; border-width: 1px 1px 2px; }
  td { height: 25px; padding: 0 5px; border-bottom: 1px solid #ddd5c8; }
  th:nth-child(4), td:nth-child(4) { text-align: center; }
  th:last-child, td:last-child { text-align: right; }
  .low { grid-template-columns: 915fr 895fr; gap: 30px; padding-top: 28px; height: auto; }
  .low h2 { padding-bottom: 1px; }
</style>
